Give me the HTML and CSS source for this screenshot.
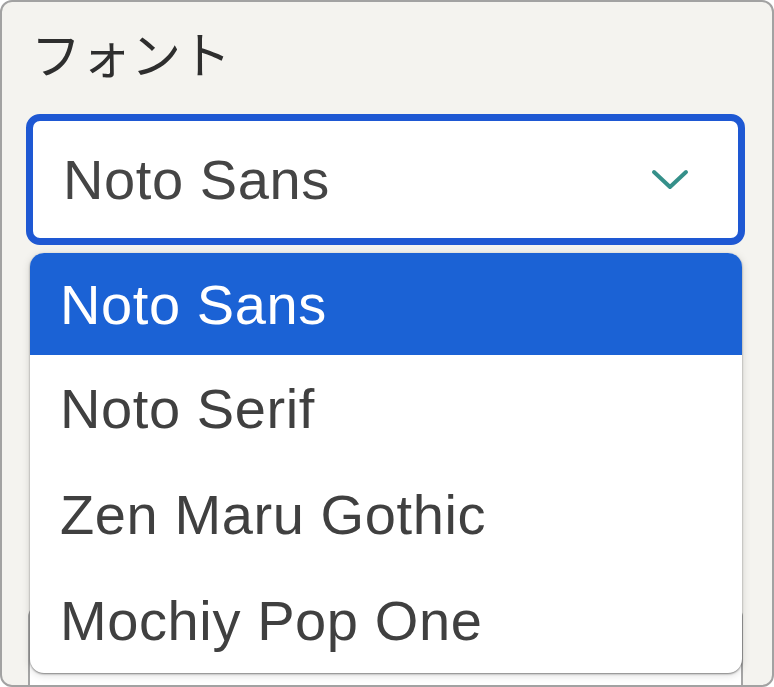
FILE: index.html
```html
<!doctype html>
<html>

<head>
    <meta charset="utf-8">
    <title>フォント</title>
    <link rel="stylesheet" href="styles.css">
</head>

<body>
    <div class="frame">
        <div class="label">フォント</div>

        <div class="field">
            <div class="select">
                <span class="value">Noto Sans</span>
                <svg class="chevron" width="40" height="24" viewBox="0 0 40 24">
                    <path d="M4 4 L20 19 L36 4" fill="none" stroke="#35908a" stroke-width="4" stroke-linecap="round" stroke-linejoin="round" />
                </svg>
            </div>

            <ul class="menu">
                <li class="active">Noto Sans</li>
                <li>Noto Serif</li>
                <li>Zen Maru Gothic</li>
                <li>Mochiy Pop One</li>
            </ul>
        </div>

        <div class="next-field">
            <span class="dot"></span>
        </div>
    </div>
</body>

</html>
```

FILE: styles.css
```css
* {
    box-sizing: border-box;
}

html,
body {
    margin: 0;
    padding: 0;
}

body {
    font-family: "Liberation Sans", Arial, sans-serif;
    background: #ffffff;
}

.frame {
    width: 774px;
    height: 687px;
    border: 2px solid #a2a2a2;
    border-radius: 12px;
    background: #f4f3ef;
    padding: 14px 27px 0 24px;
    overflow: hidden;
}

.label {
    font-family: "Noto Sans CJK JP", sans-serif;
    font-size: 50px;
    font-weight: 400;
    line-height: 72px;
    color: #2e2e2e;
    margin-left: 5px;
    margin-bottom: 26px;
}

.field {
    position: relative;
}

.select {
    height: 131px;
    border: 7px solid #1e58d3;
    border-radius: 14px;
    background: #ffffff;
    display: flex;
    align-items: center;
    justify-content: space-between;
    padding: 0 48px 0 30px;
}

.value {
    font-size: 56px;
    color: #454545;
    letter-spacing: 0.6px;
}

.chevron {
    display: block;
}

.menu {
    position: absolute;
    top: calc(100% + 8px);
    left: 4px;
    right: 3px;
    z-index: 2;
    margin: 0;
    padding: 0;
    list-style: none;
    background: #ffffff;
    border-radius: 14px;
    overflow: hidden;
    box-shadow: 0 1px 2px rgba(0, 0, 0, 0.45), 0 2px 8px rgba(0, 0, 0, 0.15);
}

.menu li {
    height: 106px;
    display: flex;
    align-items: center;
    padding-left: 30px;
    font-size: 56px;
    color: #404040;
    letter-spacing: 0.6px;
}

.menu li.active {
    height: 102px;
    background: #1b62d5;
    color: #ffffff;
}

.next-field {
    margin: 360px 2px 0 2px;
    height: 120px;
    border: 2px solid #a5a5a5;
    border-radius: 12px;
    background: #ffffff;
    padding: 24px 0 0 50px;
}

.dot {
    display: block;
    width: 34px;
    height: 34px;
    border: 3px solid #777777;
    border-radius: 50%;
}
```
